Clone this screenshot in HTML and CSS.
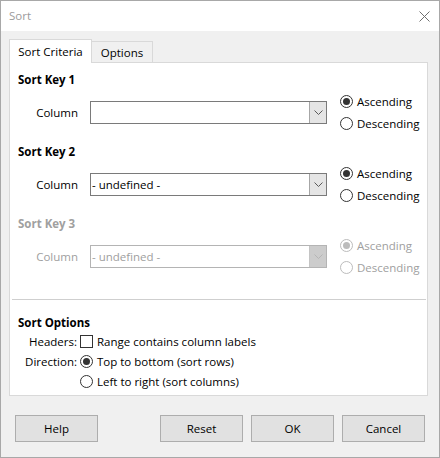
FILE: index.html
```html
<!DOCTYPE html>
<html>
<head>
<meta charset="utf-8">
<link rel="stylesheet" href="styles.css">
</head>
<body>
<div class="window">
  <div class="titlebar">
    <span class="title">Sort</span>
    <svg class="close" width="11" height="11" viewBox="0 0 11 11"><path d="M0.5 0.5 L10.5 10.5 M10.5 0.5 L0.5 10.5" stroke="#6f6f6f" stroke-width="1" fill="none"/></svg>
  </div>
  <div class="body">
    <div class="tabs">
      <div class="tab active">Sort Criteria</div>
      <div class="tab">Options</div>
    </div>
    <div class="panel">
      <div class="heading h1">Sort Key 1</div>
      <div class="keyrow">
        <div class="col-label">Column</div>
        <div class="combo"><div class="combo-text"></div><div class="combo-btn"><svg width="9" height="5" viewBox="0 0 9 5"><path d="M0.5 0.5 L4.5 4.5 L8.5 0.5" stroke="#5a5a5a" fill="none"/></svg></div></div>
        <div class="radios">
          <div class="radio-item"><span class="radio checked"></span><span>Ascending</span></div>
          <div class="radio-item"><span class="radio"></span><span>Descending</span></div>
        </div>
      </div>
      <div class="heading hn">Sort Key 2</div>
      <div class="keyrow">
        <div class="col-label">Column</div>
        <div class="combo"><div class="combo-text">- undefined -</div><div class="combo-btn"><svg width="9" height="5" viewBox="0 0 9 5"><path d="M0.5 0.5 L4.5 4.5 L8.5 0.5" stroke="#5a5a5a" fill="none"/></svg></div></div>
        <div class="radios">
          <div class="radio-item"><span class="radio checked"></span><span>Ascending</span></div>
          <div class="radio-item"><span class="radio"></span><span>Descending</span></div>
        </div>
      </div>
      <div class="heading hn disabled">Sort Key 3</div>
      <div class="keyrow disabled">
        <div class="col-label">Column</div>
        <div class="combo"><div class="combo-text">- undefined -</div><div class="combo-btn"><svg width="9" height="5" viewBox="0 0 9 5"><path d="M0.5 0.5 L4.5 4.5 L8.5 0.5" stroke="#b5b5b5" fill="none"/></svg></div></div>
        <div class="radios">
          <div class="radio-item"><span class="radio checked"></span><span>Ascending</span></div>
          <div class="radio-item"><span class="radio"></span><span>Descending</span></div>
        </div>
      </div>
      <div class="separator"></div>
      <div class="heading hopt">Sort Options</div>
      <div class="options">
        <div class="opt-label">Headers:</div>
        <div class="opt-ctrl"><span class="checkbox"></span><span>Range contains column labels</span></div>
        <div class="opt-label">Direction:</div>
        <div class="opt-ctrl"><span class="radio checked"></span><span>Top to bottom (sort rows)</span></div>
        <div class="opt-label"></div>
        <div class="opt-ctrl"><span class="radio"></span><span>Left to right (sort columns)</span></div>
      </div>
    </div>
    <div class="buttons">
      <div class="btn help">Help</div>
      <div class="spacer"></div>
      <div class="btn">Reset</div>
      <div class="btn">OK</div>
      <div class="btn">Cancel</div>
    </div>
  </div>
</div>
</body>
</html>
```
FILE: styles.css
```css
html, body {
  margin: 0;
  padding: 0;
}
body {
  font-family: "Open Sans", "Noto Sans", sans-serif;
  font-size: 11.5px;
  color: #000;
  background: #fff;
}
.window {
  width: 440px;
  height: 458px;
  box-sizing: border-box;
  border: 1px solid #a8a8a8;
  background: #f0f0f0;
  display: flex;
  flex-direction: column;
}
.titlebar {
  height: 30px;
  flex: none;
  background: #fff;
  display: flex;
  align-items: center;
  justify-content: space-between;
  padding: 0 9px 0 8px;
  color: #9b9b9b;
}
.title {
  line-height: 16px;
}
.close {
  display: block;
}
.body {
  flex: 1;
  padding: 8px 11px 0 8px;
  display: flex;
  flex-direction: column;
}
.tabs {
  display: flex;
  align-items: flex-end;
  height: 23px;
}
.tab {
  box-sizing: border-box;
  height: 21px;
  border: 1px solid #d9d9d9;
  border-bottom: none;
  background: #f0f0f0;
  display: flex;
  align-items: center;
  justify-content: center;
  width: 62px;
  margin-left: -1px;
}
.tab.active {
  height: 24px;
  width: 83px;
  margin-left: 0;
  margin-bottom: -1px;
  background: #fff;
  position: relative;
  z-index: 1;
}
.panel {
  box-sizing: border-box;
  height: 334px;
  border: 1px solid #d9d9d9;
  background: #fff;
  padding: 0 8px;
}
.heading {
  font-weight: 700;
  line-height: 16px;
}
.h1 { margin-top: 9px; }
.hn { margin-top: 10px; }
.hopt { margin-top: 15px; }
.disabled, .disabled .col-label {
  color: #a0a0a0;
}
.keyrow {
  display: flex;
  align-items: center;
  height: 44px;
  margin-top: 2px;
}
.col-label {
  flex: none;
  width: 60px;
  margin-right: 12px;
  text-align: right;
}
.combo {
  flex: none;
  box-sizing: border-box;
  width: 237px;
  height: 23px;
  border: 1px solid #7a7a7a;
  display: flex;
  background: #fff;
}
.combo-text {
  flex: 1;
  padding-left: 1px;
  line-height: 21px;
  white-space: nowrap;
}
.combo-btn {
  box-sizing: border-box;
  width: 17px;
  border-left: 1px solid #a6a6a6;
  background: #e5e5e5;
  display: flex;
  align-items: center;
  justify-content: center;
}
.combo-btn svg {
  display: block;
}
.disabled .combo {
  border-color: #b4b4b4;
}
.disabled .combo-btn {
  background: #cccccc;
  border-left-color: #c4c4c4;
}
.radios {
  margin-left: 13px;
  display: flex;
  flex-direction: column;
}
.radio-item {
  height: 22px;
  display: flex;
  align-items: center;
}
.radio {
  box-sizing: border-box;
  width: 13px;
  height: 13px;
  border: 1px solid #333;
  border-radius: 50%;
  background: #fff;
  margin-right: 4px;
  display: flex;
  align-items: center;
  justify-content: center;
  flex: none;
}
.radio.checked::after {
  content: "";
  width: 7px;
  height: 7px;
  border-radius: 50%;
  background: #333;
}
.disabled .radio {
  border-color: #bcbcbc;
}
.disabled .radio.checked::after {
  background: #bcbcbc;
}
.separator {
  height: 1px;
  background: #cfcfcf;
  margin: 21px -7px 0 -6px;
}
.options {
  display: grid;
  grid-template-columns: 59px auto;
  column-gap: 3px;
  grid-auto-rows: 20px;
}
.opt-label {
  display: flex;
  align-items: center;
  justify-content: flex-end;
}
.opt-ctrl {
  display: flex;
  align-items: center;
}
.checkbox {
  box-sizing: border-box;
  width: 13px;
  height: 13px;
  border: 1px solid #333;
  background: #fff;
  margin-right: 4px;
  flex: none;
}
.buttons {
  display: flex;
  margin-top: 19px;
  padding: 0 3px 0 6px;
  gap: 8px;
}
.spacer {
  flex: 1;
}
.btn {
  box-sizing: border-box;
  width: 83px;
  height: 27px;
  border: 1px solid #adadad;
  background: #e1e1e1;
  display: flex;
  align-items: center;
  justify-content: center;
}
```
